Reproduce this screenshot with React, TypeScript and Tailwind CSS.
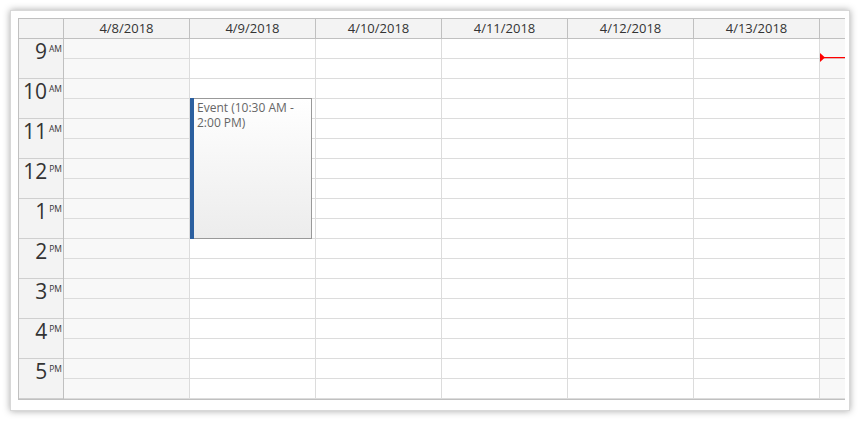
import React from "react";

const days = ["4/8/2018", "4/9/2018", "4/10/2018", "4/11/2018", "4/12/2018", "4/13/2018"];
const hours = [
  ["9", "AM"],
  ["10", "AM"],
  ["11", "AM"],
  ["12", "PM"],
  ["1", "PM"],
  ["2", "PM"],
  ["3", "PM"],
  ["4", "PM"],
  ["5", "PM"],
];
const halfHours = Array.from({ length: 18 }, (_, i) => i);

export default function App() {
  return (
    <div className="bg-white w-[860px] h-[421px] p-[10px] font-['Open_Sans',sans-serif]">
      <div className="w-[840px] h-[401px] bg-white border border-[#d8d8d8] shadow-[0_0_7px_rgba(0,0,0,0.35)] pt-[7px] pl-[7px]">
        <div className="w-[827px] border-t border-l border-b border-[#c0c0c0]">
          {/* header */}
          <div className="flex h-[20px] bg-[#f3f3f3] border-b border-[#c0c0c0] text-[13px] text-[#333]">
            <div className="w-[45px] shrink-0 border-r border-[#c0c0c0]" />
            {days.map((d) => (
              <div
                key={d}
                className="w-[126px] shrink-0 border-r border-[#c0c0c0] text-center leading-[19px]"
              >
                {d}
              </div>
            ))}
            <div className="w-[25px] shrink-0" />
          </div>

          {/* body */}
          <div className="flex">
            <div className="w-[45px] shrink-0 bg-[#f3f3f3] border-r border-[#c0c0c0]">
              {hours.map(([h, ap]) => (
                <div
                  key={h}
                  className="h-[40px] border-b border-[#cfcfcf] flex justify-end items-start pr-[1px] pt-[2px] text-[#333]"
                >
                  <span className="text-[21px] leading-[21px]">{h}</span>
                  <span className="text-[8.5px] leading-[8.5px] ml-[2px] mt-[4px]">{ap}</span>
                </div>
              ))}
            </div>

            {days.map((d, i) => (
              <div
                key={d}
                className={`relative w-[126px] shrink-0 border-r border-[#dcdcdc] ${
                  i === 0 ? "bg-[#f8f8f8]" : "bg-white"
                }`}
              >
                {halfHours.map((k) => (
                  <div key={k} className="h-[20px] border-b border-[#dcdcdc]" />
                ))}
                {i === 1 && (
                  <div className="absolute left-0 top-[59px] w-[122px] h-[141px] border border-[#999] bg-gradient-to-b from-white to-[#ececec] flex">
                    <div className="w-[4px] -ml-[1px] -my-[1px] bg-[#2b5f9f] shrink-0" />
                    <div className="pl-[3px] pt-[1px] text-[12px] leading-[15px] text-[#666]">
                      Event (10:30 AM - 2:00 PM)
                    </div>
                  </div>
                )}
              </div>
            ))}

            <div className="relative w-[25px] shrink-0 bg-[#f8f8f8]">
              {halfHours.map((k) => (
                <div key={k} className="h-[20px] border-b border-[#dcdcdc]" />
              ))}
              <svg
                className="absolute left-0 top-[14px]"
                width="25"
                height="9"
                viewBox="0 0 25 9"
              >
                <polygon points="0,0 5,4.5 0,9" fill="#ff0000" />
                <rect x="4" y="4" width="21" height="1.2" fill="#ff0000" />
              </svg>
            </div>
          </div>
        </div>
      </div>
    </div>
  );
}
